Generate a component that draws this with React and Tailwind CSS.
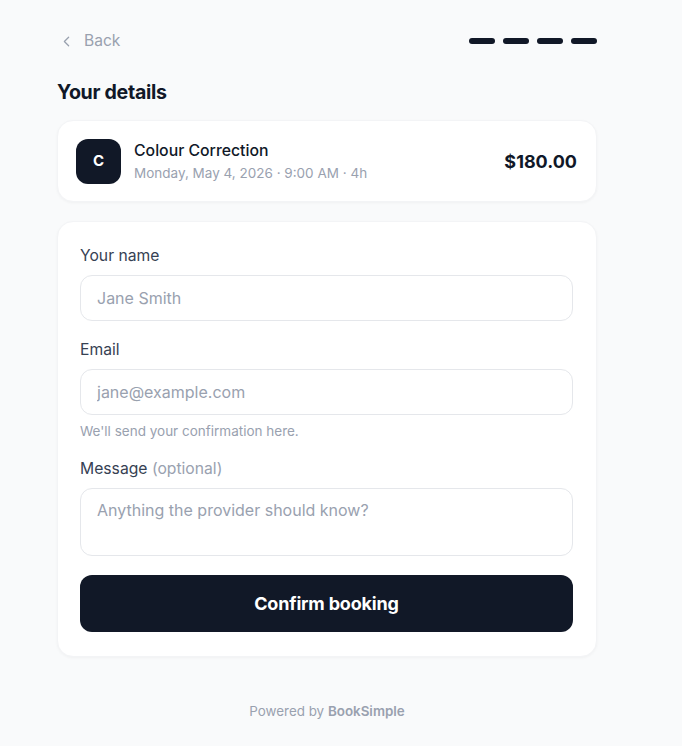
import { ChevronLeft } from "lucide-react";

export default function App(){
  return <div className="min-h-screen bg-[#f9fafb] text-gray-900" style={{fontFamily:"Inter, 'Noto Sans', sans-serif"}}>
    <div className="w-[654px] pt-[28px] pb-[26px]"><div className="w-[540px] mx-auto">
      {/* Top bar */}
      <div className="flex items-center justify-between h-[24px]">
        <button className="flex items-center gap-[9px] text-[15.6px] text-gray-400 ml-[1px] mt-[2px]"><ChevronLeft size={17} strokeWidth={1.8}/>Back</button>
        <div className="flex gap-[8px] pt-[2px]">
          {[0,1,2,3].map(i=><div key={i} className="w-[26px] h-[6px] rounded-full bg-[#111827]"/>)}
        </div>
      </div>
      <h1 className="mt-[26px] text-[19.6px] font-bold leading-[28px] tracking-[-0.015em]">Your details</h1>
      {/* Service summary */}
      <div className="mt-[14px] h-[82px] bg-white rounded-2xl border border-gray-100 shadow-[0_1px_3px_rgba(0,0,0,0.04)] flex items-center px-[18px]">
        <div className="w-[45px] h-[45px] rounded-xl bg-[#111827] text-white flex items-center justify-center font-bold text-[15px]">C</div>
        <div className="ml-[13px] flex-1 pt-[1px]">
          <div className="text-[15.8px] font-medium leading-[20px]">Colour Correction</div>
          <div className="text-[13.5px] text-gray-400 leading-[18px] mt-[3px]">Monday, May 4, 2026 · 9:00 AM · 4h</div>
        </div>
        <div className="text-[18px] font-bold mr-[1px]">$180.00</div>
      </div>
      {/* Form */}
      <div className="mt-[19px] bg-white rounded-2xl border border-gray-100 shadow-[0_1px_3px_rgba(0,0,0,0.04)] pl-[22px] pr-[23px] pt-[24px] pb-[24px]">
        <label className="block text-[15.7px] text-gray-700 leading-[19px]">Your name</label>
        <input placeholder="Jane Smith" className="mt-[10px] w-full h-[46px] rounded-xl border border-gray-200 px-[16px] text-[16px] placeholder:text-gray-400 outline-none"/>
        <label className="block mt-[19px] text-[15.7px] text-gray-700 leading-[19px]">Email</label>
        <input placeholder="jane@example.com" className="mt-[10px] w-full h-[46px] rounded-xl border border-gray-200 px-[16px] text-[16px] placeholder:text-gray-400 outline-none"/>
        <p className="mt-[7px] text-[13.5px] text-gray-400 leading-[18px]">We'll send your confirmation here.</p>
        <label className="block mt-[19px] text-[15.7px] text-gray-700 leading-[19px]">Message <span className="text-gray-400">(optional)</span></label>
        <textarea placeholder="Anything the provider should know?" className="mt-[10px] block w-full h-[68px] rounded-xl border border-gray-200 px-[16px] py-[10px] text-[16px] leading-[22px] placeholder:text-gray-400 outline-none resize-none"/>
        <button className="mt-[19px] w-full h-[57px] rounded-xl bg-[#111827] text-white text-[18px] font-bold tracking-[-0.01em]">Confirm booking</button>
      </div>
      <p className="mt-[44px] text-center text-[13.4px] text-gray-400">Powered by <span className="font-semibold">BookSimple</span></p>
    </div></div>
  </div>
}
